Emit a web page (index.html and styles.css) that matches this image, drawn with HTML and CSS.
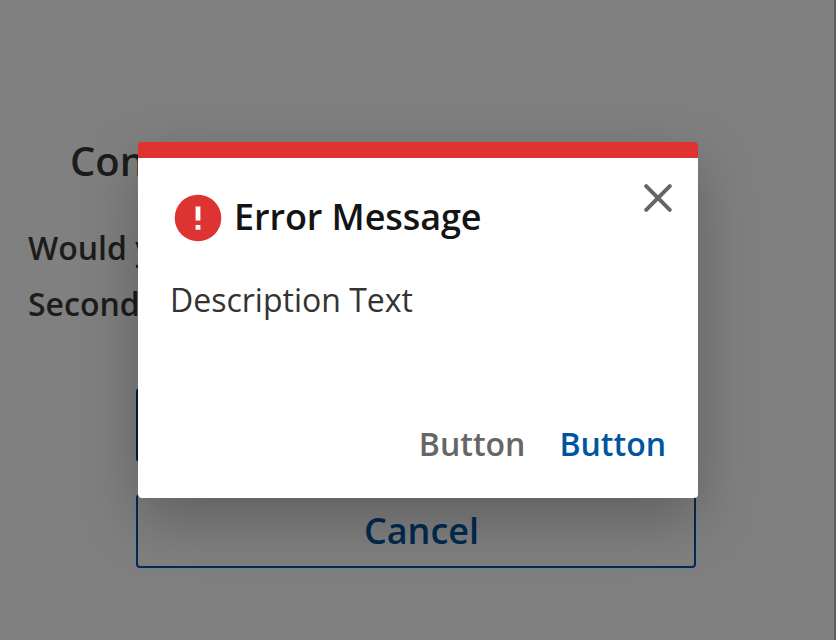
FILE: index.html
```html
<!DOCTYPE html>
<html lang="en">
<head>
<meta charset="utf-8">
<title>Error Message</title>
<link rel="stylesheet" href="styles.css">
</head>
<body>
<main class="page">
  <h1 class="title">Con</h1>
  <p class="line">Would y</p>
  <p class="line">Second</p>
  <div class="actions">
    <button class="btn primary"></button>
    <button class="btn outline">Cancel</button>
  </div>
</main>
<section class="dialog" role="dialog">
  <div class="content">
    <header class="head">
      <svg class="alert" viewBox="0 0 48 48"><circle cx="24" cy="24" r="23.3" fill="#de3333"/><path d="M21.6 12.5h4.8v14h-4.8zM21.6 31h4.8v4.8h-4.8z" fill="#fff"/></svg>
      <h2 class="heading">Error Message</h2>
      <svg class="close" viewBox="0 0 28 28"><path d="M2.2 2.2 25.8 25.8M25.8 2.2 2.2 25.8" stroke="#666" stroke-width="4" stroke-linecap="round"/></svg>
    </header>
    <p class="desc">Description Text</p>
    <footer class="foot"><button class="link muted">Button</button><button class="link">Button</button></footer>
  </div>
</section>
</body>
</html>
```
FILE: styles.css
```css
* { box-sizing: border-box; margin: 0; }
body { width: 836px; height: 640px; overflow: hidden; background: #808080; font-family: "Open Sans", sans-serif; position: relative; }
button { font: inherit; border: 0; background: none; padding: 0; }
.page { height: 640px; padding: 131px 26px 0 28px; border-right: 2px solid #5e5e5e; color: #1c1c1c; }
.title { font-size: 40px; line-height: 60px; font-weight: 600; padding-left: 42px; margin-bottom: 29px; }
.line { font-size: 32px; line-height: 56px; font-weight: 600; white-space: nowrap; }
.actions { display: flex; flex-direction: column; gap: 32px; width: 560px; margin: 56px 0 0 108px; }
.btn { height: 74px; border-radius: 4px; }
.primary { background: #001e3a; }
.outline { border: 2px solid #002b50; color: #002b50; font-size: 36px; font-weight: 600; padding: 0 0 2px 11px; }
.dialog { position: absolute; left: 138px; top: 142px; width: 560px; height: 356px; border-top: 16px solid #de3333; border-radius: 4px; background: #fff; box-shadow: 0 22px 60px rgba(0,0,0,.26); }
.content { height: 340px; padding: 26px 26px 0 32px; display: flex; flex-direction: column; }
.head { display: flex; height: 68px; }
.alert { width: 48px; height: 48px; margin: 10px 12px 0 4px; }
.heading { font-size: 36px; line-height: 66px; font-weight: 600; letter-spacing: -0.08px; color: #141414; flex: 1; white-space: nowrap; }
.close { width: 28px; height: 28px; }
.desc { font-size: 32px; line-height: 48px; color: #333; margin-top: 24px; }
.foot { display: flex; justify-content: flex-end; gap: 34px; margin-top: 96px; padding-right: 6px; }
.link { font-size: 32px; line-height: 48px; font-weight: 600; color: #00559f; }
.muted { color: #666; }
```
